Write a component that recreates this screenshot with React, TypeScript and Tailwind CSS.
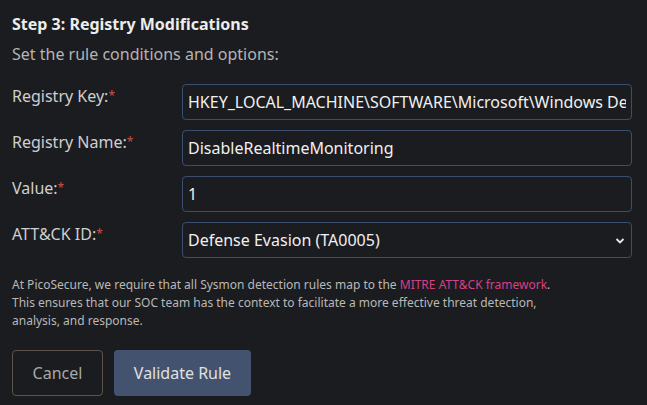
import React from 'react';

const fields = [
  { label: 'Registry Key:', value: 'HKEY_LOCAL_MACHINE\\SOFTWARE\\Microsoft\\Windows Defender\\Real-Time Protection' },
  { label: 'Registry Name:', value: 'DisableRealtimeMonitoring' },
  { label: 'Value:', value: '1' },
];

const Label = ({ text }: { text: string }) => (
  <label className="w-[170px] shrink-0 text-[16px] leading-[24px] text-[#cfcfcf]">
    {text}
    <sup className="relative top-[-2px] text-[12px] text-[#c9504c]">*</sup>
  </label>
);

const App = () => {
  return (
    <div className="min-h-[405px] w-[647px] bg-[#1b1c1f] px-3 pt-[12px] font-['Noto_Sans',sans-serif]">
      <h2 className="text-[16px] font-bold leading-[24px] text-[#ececec]">Step 3: Registry Modifications</h2>
      <p className="mt-[6px] text-[16px] leading-[24px] text-[#b4b4b4]">Set the rule conditions and options:</p>

      <div className="mt-[18px] flex flex-col gap-[10px] pr-[3px]">
        {fields.map((f) => (
          <div key={f.label} className="flex items-start">
            <Label text={f.label} />
            <input
              readOnly
              value={f.value}
              className="h-[36px] min-w-0 flex-1 rounded-[4px] border border-[#3c4e70] bg-[#1b1c1f] px-[5px] text-[16px] text-[#f0f0f0] outline-none"
            />
          </div>
        ))}
        <div className="flex items-start">
          <Label text="ATT&CK ID:" />
          <div className="relative flex h-[36px] flex-1 items-center rounded-[4px] border border-[#3c4e70] px-[5px] text-[16px] text-[#f0f0f0]">
            Defense Evasion (TA0005)
            <svg className="absolute right-[6px] top-[14px]" width="10" height="8" viewBox="0 0 10 8" fill="none">
              <path d="M1.5 2 L5 5.5 L8.5 2" stroke="#e8e8e8" strokeWidth="1.8" />
            </svg>
          </div>
        </div>
      </div>

      <p className="mt-[18px] text-[12px] leading-[18px] text-[#b8b8b8]">
        At PicoSecure, we require that all Sysmon detection rules map to the{' '}
        <a className="text-[#d6408a]">MITRE ATT&amp;CK framework</a>.
        <br />
        This ensures that our SOC team has the context to facilitate a more effective threat detection,
        <br />
        analysis, and response.
      </p>

      <div className="mt-[20px] flex gap-[11px]">
        <button className="h-[46px] w-[91px] rounded-[4px] border border-[#5b544a] text-[16px] text-[#a8a8a8]">Cancel</button>
        <button className="h-[46px] w-[137px] rounded-[4px] bg-[#43536f] text-[16px] text-[#e0e0e0]">Validate Rule</button>
      </div>
    </div>
  );
};

export default App;
